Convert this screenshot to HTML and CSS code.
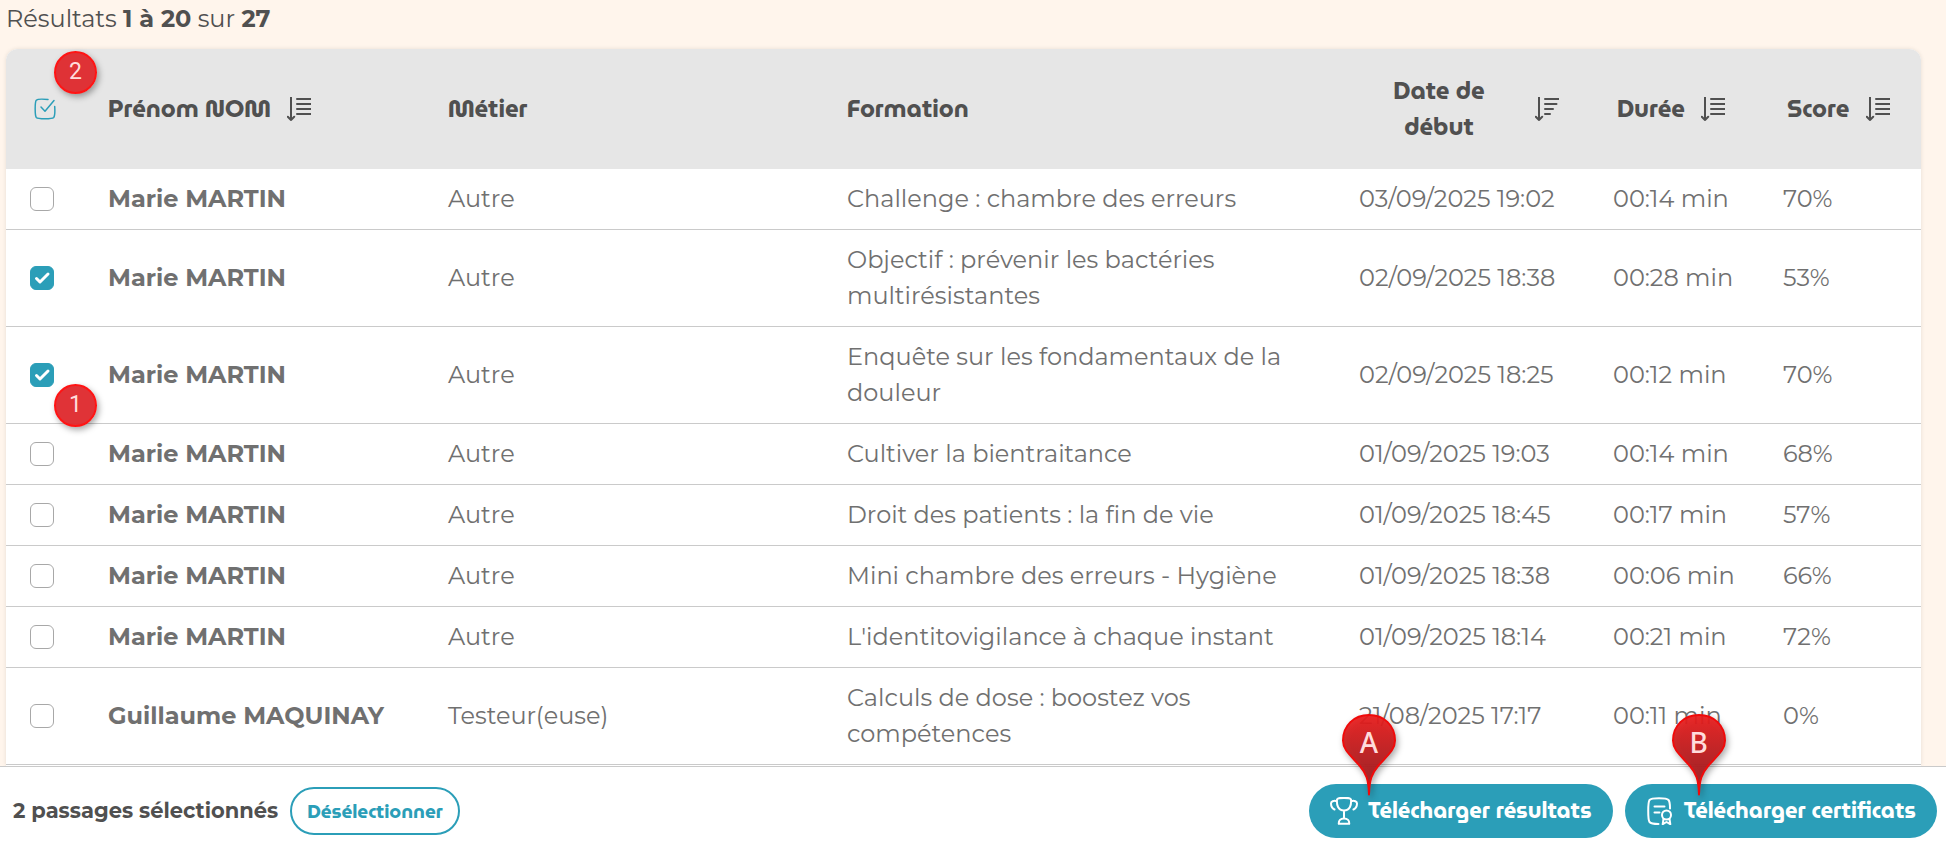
FILE: index.html
```html
<!DOCTYPE html>
<html lang="fr">
<head>
    <meta charset="UTF-8">
    <title>Résultats</title>
    <link rel="stylesheet" href="styles.css">
</head>
<body>
  <!-- shared icons -->
  <svg class="sprite" aria-hidden="true">
      <symbol id="icon-sort" viewBox="0 0 24 24">
          <path d="M4 0v23M.8 19.8L4 23l3.200-3.200M10 2h14M10 7h14M10 12h14M10 17h14"/>
      </symbol>
      <symbol id="icon-sort-desc" viewBox="0 0 24 24">
          <path d="M4 0v23M.8 19.8L4 23l3.200-3.200M10 2h14M10 7h11.500M10 12h8M10 17h5"/>
      </symbol>
      <symbol id="icon-pin" viewBox="0 0 54 82">
          <path d="M27 80.500C26.500 66 24.500 59.500 17.500 51.500C7.500 40.500 1 35.500 1 26.500C1 11.500 12 1 27 1S53 11.500 53 26.500C53 35.500 46.500 40.500 36.500 51.500C29.500 59.500 27.500 66 27 80.500Z"/>
      </symbol>
      <linearGradient id="pin-fill" x1="0" y1="0" x2="0" y2="1">
          <stop offset="0" stop-color="#ec1c1c"/>
          <stop offset="1" stop-color="#8e1a1e"/>
      </linearGradient>
  </svg>

  <main class="results">
      <p class="results-count">Résultats <b>1 à 20</b> sur <b>27</b></p>
      <div class="card">
          <table class="table">
              <colgroup>
                  <col class="col-check">
                  <col class="col-name">
                  <col class="col-job">
                  <col class="col-course">
                  <col class="col-date">
                  <col class="col-time">
                  <col class="col-score">
              </colgroup>
              <thead>
                  <tr>
                      <th class="cell-check">
                          <button class="select-all" type="button" aria-label="Tout sélectionner">
                              <svg viewBox="0 0 22 22" width="22" height="22">
                                  <path d="M14 1.500C7 .8 3.500 1 2.300 2.200C.8 3.800.8 17.500 2.300 19.500C4 21.200 18 21.200 19.700 19.500C20.800 18.200 21 13 20.700 8.500"/>
                                  <path d="M7 9l4 4.200L20 2.500"/>
                              </svg>
                          </button>
                          <span class="badge badge-top">2</span>
                      </th>
                      <th><button class="sort" type="button">Prénom NOM <svg class="sort-icon"><use href="#icon-sort"/></svg></button></th>
                      <th>Métier</th>
                      <th>Formation</th>
                      <th><button class="sort sort-date" type="button"><span class="sort-label">Date de début</span> <svg class="sort-icon"><use href="#icon-sort-desc"/></svg></button></th>
                      <th><button class="sort sort-short" type="button">Durée <svg class="sort-icon"><use href="#icon-sort"/></svg></button></th>
                      <th><button class="sort sort-short" type="button">Score <svg class="sort-icon"><use href="#icon-sort"/></svg></button></th>
                  </tr>
              </thead>
              <tbody>
                  <tr>
                      <td class="cell-check"><input class="check" type="checkbox" aria-label="Sélectionner Marie MARTIN"></td>
                      <td class="name">Marie MARTIN</td>
                      <td>Autre</td>
                      <td>Challenge : chambre des erreurs</td>
                      <td class="date">03/09/2025 19:02</td>
                      <td class="time">00:14 min</td>
                      <td>70%</td>
                  </tr>
                  <tr>
                      <td class="cell-check"><input class="check" type="checkbox" checked aria-label="Sélectionner Marie MARTIN"></td>
                      <td class="name">Marie MARTIN</td>
                      <td>Autre</td>
                      <td>Objectif : prévenir les bactéries multirésistantes</td>
                      <td class="date">02/09/2025 18:38</td>
                      <td class="time">00:28 min</td>
                      <td>53%</td>
                  </tr>
                  <tr>
                      <td class="cell-check">
                          <input class="check" type="checkbox" checked aria-label="Sélectionner Marie MARTIN">
                          <span class="badge badge-bottom">1</span>
                      </td>
                      <td class="name">Marie MARTIN</td>
                      <td>Autre</td>
                      <td>Enquête sur les fondamentaux de la douleur</td>
                      <td class="date">02/09/2025 18:25</td>
                      <td class="time">00:12 min</td>
                      <td>70%</td>
                  </tr>
                  <tr>
                      <td class="cell-check"><input class="check" type="checkbox" aria-label="Sélectionner Marie MARTIN"></td>
                      <td class="name">Marie MARTIN</td>
                      <td>Autre</td>
                      <td>Cultiver la bientraitance</td>
                      <td class="date">01/09/2025 19:03</td>
                      <td class="time">00:14 min</td>
                      <td>68%</td>
                  </tr>
                  <tr>
                      <td class="cell-check"><input class="check" type="checkbox" aria-label="Sélectionner Marie MARTIN"></td>
                      <td class="name">Marie MARTIN</td>
                      <td>Autre</td>
                      <td>Droit des patients : la fin de vie</td>
                      <td class="date">01/09/2025 18:45</td>
                      <td class="time">00:17 min</td>
                      <td>57%</td>
                  </tr>
                  <tr>
                      <td class="cell-check"><input class="check" type="checkbox" aria-label="Sélectionner Marie MARTIN"></td>
                      <td class="name">Marie MARTIN</td>
                      <td>Autre</td>
                      <td>Mini chambre des erreurs - Hygiène</td>
                      <td class="date">01/09/2025 18:38</td>
                      <td class="time">00:06 min</td>
                      <td>66%</td>
                  </tr>
                  <tr>
                      <td class="cell-check"><input class="check" type="checkbox" aria-label="Sélectionner Marie MARTIN"></td>
                      <td class="name">Marie MARTIN</td>
                      <td>Autre</td>
                      <td>L'identitovigilance à chaque instant</td>
                      <td class="date">01/09/2025 18:14</td>
                      <td class="time">00:21 min</td>
                      <td>72%</td>
                  </tr>
                  <tr>
                      <td class="cell-check"><input class="check" type="checkbox" aria-label="Sélectionner Guillaume MAQUINAY"></td>
                      <td class="name">Guillaume MAQUINAY</td>
                      <td>Testeur(euse)</td>
                      <td>Calculs de dose : boostez vos compétences</td>
                      <td class="date">21/08/2025 17:17</td>
                      <td class="time">00:11 min</td>
                      <td>0%</td>
                  </tr>
              </tbody>
          </table>
      </div>
  </main>

  <footer class="actions">
      <p class="selected-count">2 passages sélectionnés</p>
      <button class="btn btn-outline" type="button">Désélectionner</button>
      <div class="downloads">
          <div class="download">
              <button class="btn btn-fill" type="button">
                  <svg class="btn-icon" viewBox="0 0 28 28">
                      <path d="M7 2.500C7.500 1 9 .9 14 .9S20.500 1 21 2.500C21.500 8 20 13.500 14 13.500S6.500 8 7 2.500ZM14 13.500V21.500M8.800 26.800C8.500 23.500 10.500 21.500 14 21.500S19.500 23.500 19.200 26.800ZM6.800 4.200C3.500 3.200 1 4.500 1 6.500C1 9.500 2.500 11.500 4.500 12.500M21.200 4.200C24.500 3.200 27 4.500 27 6.500C27 9.500 25.500 11.500 23.500 12.500"/>
                  </svg>
                  Télécharger résultats
              </button>
              <span class="pin pin-a"><svg class="pin-shape"><use href="#icon-pin"/></svg><span class="pin-letter">A</span></span>
          </div>
          <div class="download">
              <button class="btn btn-fill" type="button">
                  <svg class="btn-icon" viewBox="0 0 28 28">
                      <path d="M12.500 27C8 27 5 26.800 3.500 25C1.800 22.500 1.800 5.500 3.500 3C5.500.6 20.500.6 22.500 3C23.800 4.500 24 7.500 24 11.500M8.500 9.500h10M8.500 15.500h5"/>
                      <circle cx="20.500" cy="18" r="4.500"/>
                      <path d="M17.500 22l-.8 5.200 3.800-2.200 3.800 2.200-.8-5.200"/>
                  </svg>
                  Télécharger certificats
              </button>
              <span class="pin pin-b"><svg class="pin-shape"><use href="#icon-pin"/></svg><span class="pin-letter">B</span></span>
          </div>
      </div>
  </footer>
</body>
</html>
```
FILE: styles.css
```css
                                /*General Style*/

*
{
    box-sizing: border-box;
    margin: 0;
    padding: 0;
}
body
{
    display: flex;
    flex-direction: column;
    height: 100vh;
    overflow: hidden;
    background-color: #fff5ec;
    font-family: Montserrat, Inter, sans-serif;
    font-size: 24px;
    line-height: 36px;
    color: #707070;
}
button
{
    border: none;
    background: none;
    font: inherit;
    color: inherit;
    cursor: pointer;
}
svg
{
    flex-shrink: 0;
    fill: none;
    stroke: currentColor;
    stroke-linecap: round;
    stroke-linejoin: round;
}
.sprite
{
    position: absolute;
    width: 0;
    height: 0;
}

                                /*RESULTS*/

.results
{
    display: flex;
    flex-direction: column;
    flex: 1;
    min-height: 0;
    padding: 1px 25px 0 6px;
}
.results-count
{
    margin-bottom: 12px;
    color: #505050;
}
.card
{
    flex: 1;
    min-height: 0;
    border-radius: 12px 12px 0 0;
    background-color: white;
    box-shadow: 0 0 4px rgba(0, 0, 0, 0.1);
}

                                /*TABLE*/

.table
{
    width: 100%;
    table-layout: fixed;
    border-collapse: separate;
    border-spacing: 0;
}
.col-check
{
    width: 78px;
}
.col-name
{
    width: 340px;
}
.col-job
{
    width: 399px;
}
.col-date
{
    width: 254px;
}
.col-time
{
    width: 170px;
}
.col-score
{
    width: 162px;
}
th
{
    padding: 24px;
    background-color: #e6e6e6;
    font-family: MuseoModerno, Montserrat, Inter, sans-serif;
    font-weight: 700;
    text-align: left;
    color: #505050;
}
th:first-child
{
    border-top-left-radius: 12px;
}
th:last-child
{
    border-top-right-radius: 12px;
}
td
{
    padding: 12px 24px;
    border-bottom: 1px solid #cacaca;
}
.cell-check
{
    position: relative;
}
.name
{
    font-weight: 700;
    white-space: nowrap;
}
.date,
.time
{
    padding-right: 0;
    white-space: nowrap;
}
.select-all
{
    display: flex;
    margin: 0 auto;
    color: #2b9eb8;
}
.select-all svg
{
    stroke-width: 1.5;
}
.sort
{
    display: flex;
    align-items: center;
    gap: 16px;
    white-space: nowrap;
}
.sort-short
{
    padding-left: 4px;
}
.sort-date
{
    width: 100%;
    padding-right: 6px;
    white-space: normal;
}
.sort-label
{
    flex: 1;
    padding: 0 32px;
}
.sort-icon
{
    width: 24px;
    height: 24px;
    stroke-width: 2;
}
.check
{
    display: block;
    width: 24px;
    height: 24px;
    appearance: none;
    border: 1px solid #a8a8a8;
    border-radius: 6px;
    background-color: white;
}
.check:checked
{
    border-color: #2b9eb8;
    background: #2b9eb8 url("data:image/svg+xml,%3Csvg xmlns='http://www.w3.org/2000/svg' viewBox='0 0 24 24'%3E%3Cpath d='M6.500 12.500l3.500 3.500 8-8' fill='none' stroke='white' stroke-width='3' stroke-linecap='round' stroke-linejoin='round'/%3E%3C/svg%3E") center / 24px;
}

                                /*MARKERS*/

.badge
{
    position: absolute;
    left: 48px;
    z-index: 1;
    width: 43px;
    height: 43px;
    border: 2px solid #ff1414;
    border-radius: 50%;
    background-color: rgba(222, 40, 44, 0.95);
    box-shadow: 2px 3px 6px rgba(0, 0, 0, 0.35);
    font-family: Roboto, sans-serif;
    font-size: 23px;
    font-weight: 400;
    line-height: 38px;
    text-align: center;
    color: #ffdcdc;
}
.badge-top
{
    top: 2px;
}
.badge-bottom
{
    bottom: -4px;
}
.pin
{
    position: absolute;
    bottom: 42px;
    width: 54px;
    height: 82px;
    pointer-events: none;
}
.pin-a
{
    left: 33px;
}
.pin-b
{
    left: 47px;
}
.pin-shape
{
    display: block;
    width: 54px;
    height: 82px;
    fill: url(#pin-fill);
    fill-opacity: 0.93;
    stroke: #f00a0a;
    stroke-width: 2;
    filter: drop-shadow(2px 3px 3px rgba(0, 0, 0, 0.35));
}
.pin-letter
{
    position: absolute;
    inset: 10px 0 auto;
    font-family: "Noto Sans", sans-serif;
    font-size: 28px;
    font-weight: 500;
    text-align: center;
    color: #ffdcdc;
}

                                /*ACTIONS*/

.actions
{
    display: flex;
    align-items: center;
    gap: 12px;
    padding: 17px 9px 14px 13px;
    border-top: 1px solid #cacaca;
    background-color: white;
}
.selected-count
{
    font-size: 21px;
    font-weight: 700;
    color: #505050;
}
.downloads
{
    display: flex;
    gap: 12px;
    margin-left: auto;
}
.download
{
    position: relative;
}
.btn
{
    display: flex;
    align-items: center;
    border-radius: 27px;
    font-family: MuseoModerno, Montserrat, Inter, sans-serif;
    font-weight: 700;
    white-space: nowrap;
}
.btn-outline
{
    height: 48px;
    padding: 0 15px;
    border: 2px solid #2b9eb8;
    font-size: 19px;
    color: #2b9eb8;
}
.btn-fill
{
    gap: 10px;
    height: 54px;
    padding: 0 21px;
    background-color: #2b9eb8;
    font-size: 22px;
    color: white;
}
.btn-icon
{
    width: 28px;
    height: 28px;
    stroke-width: 2;
}
```
